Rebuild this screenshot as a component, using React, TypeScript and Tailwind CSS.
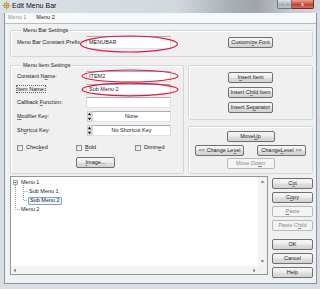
import React from "react";

const FONT = { fontFamily: '"Liberation Sans", Arial, sans-serif' };

function U({ c }: { c: string }) {
  return <span className="underline decoration-[#808080] underline-offset-[1px]">{c}</span>;
}

function Btn({
  children,
  cls = "",
  disabled = false,
}: {
  children: React.ReactNode;
  cls?: string;
  disabled?: boolean;
}) {
  const look = disabled
    ? "border-[#b4b9bd] bg-[#f4f4f4] text-[#8a8a8a]"
    : "border-[#707070] bg-[linear-gradient(180deg,#f6f6f6_0%,#ededed_48%,#dfdfdf_52%,#d2d2d2_100%)] text-[#1a1a1a]";
  return (
    <div
      className={`flex h-[11px] shrink-0 items-center justify-center whitespace-nowrap rounded-[2px] border leading-none ${look} ${cls}`}
    >
      {children}
    </div>
  );
}

function Group({
  label,
  cls = "",
  children,
}: {
  label?: string;
  cls?: string;
  children?: React.ReactNode;
}) {
  return (
    <div
      className={`relative rounded-[2px] border border-[#d0d8de] shadow-[inset_1px_1px_0_#ffffff] ${cls}`}
    >
      {label ? (
        <span className="absolute left-[11px] top-[-4px] bg-[#f0f0f0] px-[1px] leading-[7px] text-[#1a1a1a]">
          {label}
        </span>
      ) : null}
      {children}
    </div>
  );
}

function TB({
  children,
  cls = "",
  center = false,
}: {
  children?: React.ReactNode;
  cls?: string;
  center?: boolean;
}) {
  return (
    <div
      className={`flex shrink-0 items-center border border-[#abadb3] border-x-[#d9dbe2] border-b-[#e0e4ea] bg-white leading-none text-[#1a1a1a] ${
        center ? "justify-center" : "pl-[2px]"
      } ${cls}`}
    >
      {children}
    </div>
  );
}

function Spin() {
  return (
    <svg width="5" height="11" viewBox="0 0 5 11" className="shrink-0">
      <rect x="0.5" y="0.5" width="4" height="10" fill="#f4f4f4" stroke="#cfcfcf" />
      <path d="M2.5 1.6 L4.1 4.2 L0.9 4.2 Z" fill="#111" />
      <path d="M0.9 6.8 L4.1 6.8 L2.5 9.4 Z" fill="#111" />
    </svg>
  );
}

function CB({ children, cls = "" }: { children: React.ReactNode; cls?: string }) {
  return (
    <div className={`flex items-center ${cls}`}>
      <div className="h-[6px] w-[6px] shrink-0 border border-[#8e8f8f] bg-[linear-gradient(135deg,#d6d6d6,#ffffff)]" />
      <span className="ml-[3px] leading-none text-[#1a1a1a]">{children}</span>
    </div>
  );
}

function Row({
  label,
  children,
  cls = "",
}: {
  label: React.ReactNode;
  children: React.ReactNode;
  cls?: string;
}) {
  return (
    <div className={`flex h-[11px] items-center ${cls}`}>
      <div className="w-[69px] shrink-0 leading-none text-[#1a1a1a]">{label}</div>
      {children}
    </div>
  );
}

function AppIcon() {
  return (
    <svg width="9" height="9" viewBox="0 0 9 9" className="shrink-0">
      <g stroke="#c8901a" strokeWidth="0.8">
        <path d="M4.5 0.5 L4.5 8.5 M0.5 4.5 L8.5 4.5 M1.7 1.7 L7.3 7.3 M7.3 1.7 L1.7 7.3" />
      </g>
      <circle cx="4.5" cy="4.5" r="2.4" fill="#f4d34a" stroke="#b07a10" strokeWidth="0.6" />
      <circle cx="4.5" cy="4.5" r="1" fill="#5a7fb8" />
    </svg>
  );
}

function Tree() {
  return (
    <div className="flex h-[99px] w-[258px] flex-col border border-[#8f959c] bg-white">
      <div className="flex min-h-0 flex-1">
        <div className="relative flex-1 pt-[1px]">
          <svg
            className="absolute left-0 top-0"
            width="60"
            height="40"
            viewBox="0 0 60 40"
          >
            <g stroke="#a0a0a0" strokeWidth="1" strokeDasharray="1 1" fill="none">
              <path d="M4.5 8 L4.5 32.5 L9 32.5" />
              <path d="M12.5 8 L12.5 23.5 L17 23.5 M12.5 14.5 L17 14.5" />
            </g>
            <rect x="2.5" y="3.5" width="4" height="4" fill="#fff" stroke="#919191" strokeWidth="0.8" />
            <path d="M3.3 5.5 L5.7 5.5" stroke="#333" strokeWidth="0.8" />
          </svg>
          <div className="flex h-[9px] items-center pl-[10px] leading-none text-[#1a1a1a]">Menu 1</div>
          <div className="flex h-[9px] items-center pl-[18px] leading-none text-[#1a1a1a]">Sub Menu 1</div>
          <div className="flex h-[9px] items-center pl-[17px]">
            <div className="flex h-[8px] items-center rounded-[1px] border border-[#7da2ce] bg-[#f1f6fc] px-[1px] leading-none text-[#1a1a1a]">
              Sub Menu 2
            </div>
          </div>
          <div className="flex h-[9px] items-center pl-[10px] leading-none text-[#1a1a1a]">Menu 2</div>
        </div>
        <div className="flex w-[9px] flex-col items-center justify-between bg-[#f3f3f3] py-[3px]">
          <svg width="5" height="3" viewBox="0 0 5 3">
            <path d="M0.5 2.7 L2.5 0.5 L4.5 2.7 Z" fill="#7a7a7a" />
          </svg>
          <svg width="5" height="3" viewBox="0 0 5 3">
            <path d="M0.5 0.3 L4.5 0.3 L2.5 2.5 Z" fill="#7a7a7a" />
          </svg>
        </div>
      </div>
      <div className="flex h-[8px]">
        <div className="flex flex-1 items-center justify-between bg-[#f3f3f3] px-[2px]">
          <svg width="3" height="5" viewBox="0 0 3 5">
            <path d="M2.7 0.5 L0.5 2.5 L2.7 4.5 Z" fill="#7a7a7a" />
          </svg>
          <svg width="3" height="5" viewBox="0 0 3 5">
            <path d="M0.3 0.5 L2.5 2.5 L0.3 4.5 Z" fill="#7a7a7a" />
          </svg>
        </div>
        <div className="w-[9px] bg-[#f0f0f0]" />
      </div>
    </div>
  );
}

export default function App() {
  return (
    <div
      style={FONT}
      className="relative flex h-[289px] w-[320px] flex-col overflow-hidden bg-[#d7dde3] text-[5.5px]"
    >
      {/* Title bar */}
      <div className="flex h-[13px] shrink-0 items-start bg-[linear-gradient(90deg,#dae1e8_0%,#d1d8e0_55%,#a9afb6_72%,#9ea4aa_80%,#c3c9cf_90%,#d4d9de_100%)]">
        <div className="ml-[2px] mt-[1px]">
          <AppIcon />
        </div>
        <span className="ml-[1px] mt-[2px] text-[7px] leading-none text-black [text-shadow:0_0_2px_#ffffff]">
          Edit Menu Bar
        </span>
        <div className="ml-auto mr-[6px] flex">
          <div className="flex h-[9px] w-[15px] items-center justify-center rounded-bl-[2px] border border-t-0 border-[#6d7680] bg-[linear-gradient(180deg,#dfe4e9,#b4bcc4_50%,#a3acb5_51%,#c1c8cf)] text-[6px] font-bold leading-none text-white [text-shadow:0_0_1px_#333]">
            ?
          </div>
          <div className="flex h-[9px] w-[22px] items-center justify-center rounded-br-[2px] border border-l-0 border-t-0 border-[#6e2a24] bg-[linear-gradient(180deg,#e8a493,#d3523f_50%,#c33b26_51%,#d9705c)] text-[6px] font-bold leading-none text-white [text-shadow:0_0_1px_#400]">
            x
          </div>
        </div>
      </div>

      {/* Client */}
      <div className="mb-[5px] ml-[4px] mr-[3px] flex min-h-0 flex-1 flex-col border border-t-0 border-[#8a929b] bg-[#f0f0f0]">
        {/* Menu strip */}
        <div className="flex h-[11px] shrink-0 items-center border-b border-[#b6bcc3] bg-[#f7f8f9] pl-[3px] leading-none">
          <span className="text-[#8f8f8f]">Menu 1</span>
          <span className="ml-[10px] text-[#1a1a1a]">Menu 2</span>
        </div>

        {/* Body */}
        <div className="flex flex-col pl-[5px] pr-[3px] pt-[6px]">
          <Group label="Menu Bar Settings" cls="h-[27px] w-[303px]">
            <div className="mt-[5px] flex h-[13px] items-center pl-[6px]">
              <div className="w-[69px] shrink-0 leading-none text-[#1a1a1a]">
                Menu Bar Constant Prefix:
              </div>
              <TB cls="h-[13px] w-[85px]">MENUBAR</TB>
              <Btn cls="ml-[57px] w-[45px]">
                Customi<U c="z" />e Font
              </Btn>
            </div>
          </Group>

          <div className="mt-[8px] flex h-[109px]">
            <Group label="Menu Item Settings" cls="h-[109px] w-[174px]">
              <div className="flex flex-col pl-[6px] pt-[5px]">
                <Row label={<>Constant N<U c="a" />me:</>}>
                  <TB cls="h-[11px] w-[85px]">ITEM2</TB>
                </Row>
                <Row
                  cls="mt-[2px]"
                  label={
                    <span className="outline outline-1 outline-dotted outline-[#666] outline-offset-0">
                      <U c="I" />tem Name:
                    </span>
                  }
                >
                  <TB cls="h-[11px] w-[85px]">Sub Menu 2</TB>
                </Row>
                <Row cls="mt-[2px]" label={<>Callback <U c="F" />unction:</>}>
                  <TB cls="h-[11px] w-[85px]" />
                </Row>
                <Row cls="mt-[3px]" label={<><U c="M" />odifier Key:</>}>
                  <div className="ml-[1px] flex items-center">
                    <Spin />
                    <TB center cls="h-[11px] w-[79px]">None</TB>
                  </div>
                </Row>
                <Row cls="mt-[3px]" label={<>Sh<U c="o" />rtcut Key:</>}>
                  <div className="ml-[1px] flex items-center">
                    <Spin />
                    <TB center cls="h-[11px] w-[79px]">No Shortcut Key</TB>
                  </div>
                </Row>
                <div className="mt-[8px] flex h-[7px] items-center">
                  <CB cls="w-[59px]">
                    Chec<U c="k" />ed
                  </CB>
                  <CB cls="w-[59px]">
                    <U c="B" />old
                  </CB>
                  <CB>
                    Dimm<U c="e" />d
                  </CB>
                </div>
                <Btn cls="ml-[59px] mt-[6px] w-[39px]">
                  <U c="I" />mage...
                </Btn>
              </div>
            </Group>

            <div className="ml-[4px] flex w-[125px] flex-col">
              <Group cls="h-[55px] w-[125px]">
                <div className="flex flex-col items-center gap-[4px] pt-[6px]">
                  <Btn cls="w-[45px]">
                    I<U c="n" />sert Item
                  </Btn>
                  <Btn cls="w-[45px]">
                    Insert C<U c="h" />ild Item
                  </Btn>
                  <Btn cls="w-[45px]">
                    Insert Se<U c="p" />arator
                  </Btn>
                </div>
              </Group>
              <Group cls="mt-[6px] h-[48px] w-[125px]">
                <div className="flex flex-col pt-[4px]">
                  <div className="flex justify-center">
                    <Btn cls="w-[48px]">
                      Move <U c="U" />p
                    </Btn>
                  </div>
                  <div className="mt-[3px] flex justify-between px-[6px]">
                    <Btn cls="w-[49px]">
                      &lt;&lt; Change Le<U c="v" />el
                    </Btn>
                    <Btn cls="w-[49px]">
                      Change <U c="L" />evel &gt;&gt;
                    </Btn>
                  </div>
                  <div className="mt-[2px] flex justify-center">
                    <Btn disabled cls="w-[48px]">
                      Move Do<U c="w" />n
                    </Btn>
                  </div>
                </div>
              </Group>
            </div>
          </div>

          <div className="mt-[2px] flex">
            <Tree />
            <div className="ml-[4px] flex w-[41px] flex-col pt-[2px]">
              <Btn cls="w-[41px]">
                C<U c="u" />t
              </Btn>
              <Btn cls="mt-[3px] w-[41px]">
                C<U c="o" />py
              </Btn>
              <Btn disabled cls="mt-[3px] w-[41px]">
                <U c="P" />aste
              </Btn>
              <Btn disabled cls="mt-[3px] w-[41px]">
                Paste C<U c="h" />ild
              </Btn>
              <Btn cls="mt-[8px] w-[41px]">OK</Btn>
              <Btn cls="mt-[3px] w-[41px]">Cancel</Btn>
              <Btn cls="mt-[3px] w-[41px]">Help</Btn>
            </div>
          </div>
        </div>
      </div>

      {/* red annotation ellipses */}
      <svg
        className="pointer-events-none absolute left-0 top-0"
        width="320"
        height="289"
        viewBox="0 0 320 289"
      >
        <g fill="none" stroke="#e01840" strokeWidth="1.2">
          <ellipse cx="129" cy="44" rx="48.5" ry="8" />
          <ellipse cx="130" cy="76" rx="48" ry="6" />
          <ellipse cx="130" cy="89.5" rx="48" ry="6.3" />
        </g>
      </svg>
    </div>
  );
}
